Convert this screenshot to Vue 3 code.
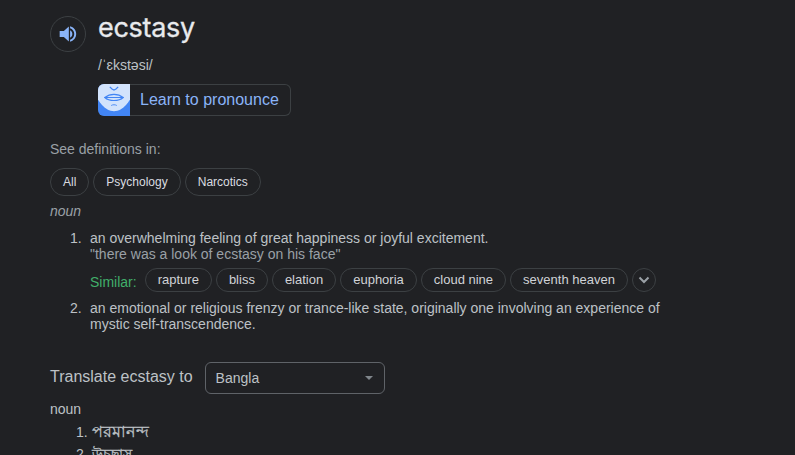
<script setup>
const topics = ['All', 'Psychology', 'Narcotics']
const similar = ['rapture', 'bliss', 'elation', 'euphoria', 'cloud nine', 'seventh heaven']
const translations = ['পরমানন্দ', 'উচ্ছ্বাস']
</script>

<template>
  <main class="dictionary">
    <header class="entry">
      <button class="speaker" aria-label="Listen">
        <svg width="20" height="20" viewBox="0 0 24 24" fill="#8ab4f8">
          <path d="M2 8.500v7h5l6 5.500V3L7 8.500zM14.500 7.500v9c1.700-.8 2.700-2.500 2.700-4.500s-1-3.700-2.700-4.500zM14.500 2.800v2.300c3 .9 5 3.600 5 6.900s-2 6-5 6.900v2.300c4.200-1 7.300-4.700 7.300-9.200s-3.100-8.200-7.300-9.200z" />
        </svg>
      </button>
      <div class="headword">
        <h1>ecstasy</h1>
        <div class="phonetic">/ˈɛkstəsi/</div>
        <button class="learn">
          <svg width="32" height="32" viewBox="0 0 32 32" fill="none">
            <path fill="#4285f4" d="M0 0h32v32H0z" />
            <path fill="#d2e3fc" d="M0 0h32v15.500c-2 3.500-5.500 7.500-9.500 10-4 2.300-9 2.300-13 0C5.500 23 2 19 0 15.500z" />
            <g stroke="#4285f4" stroke-width="1.200">
              <path d="M11.800 2.800 14 5l2 1 2-1 2.200-2.200" />
              <path d="M6.800 13.500c2.200-1.800 4.700-3.200 9.200-3.200s7 1.400 9.200 3.200c-2.200 2-4.700 3-9.200 3s-7-1-9.200-3z" />
              <path d="M6.500 13.500h19" />
              <path d="M13.200 21.500c1.600-1 4-1 5.600 0" stroke-width=".9" />
            </g>
          </svg>
          <span>Learn to pronounce</span>
        </button>
      </div>
    </header>

    <p class="see">See definitions in:</p>
    <div class="topics">
      <button v-for="t in topics" :key="t" class="chip">{{ t }}</button>
    </div>
    <p class="pos">noun</p>

    <section class="senses">
      <div class="sense">
        <span class="num">1.</span>
        <div>
          <p>an overwhelming feeling of great happiness or joyful excitement.</p>
          <p class="example">"there was a look of ecstasy on his face"</p>
          <div class="similar">
            <span class="label">Similar:</span>
            <button v-for="s in similar" :key="s" class="chip small">{{ s }}</button>
            <button class="chip small more" aria-label="More">
              <svg width="12" height="8" viewBox="0 0 12 8" fill="none" stroke="#9aa0a6" stroke-width="2">
                <path d="M1.500 1.500 6 6l4.500-4.500" />
              </svg>
            </button>
          </div>
        </div>
      </div>
      <div class="sense">
        <span class="num">2.</span>
        <p>an emotional or religious frenzy or trance-like state, originally one involving an experience of mystic self-transcendence.</p>
      </div>
    </section>

    <div class="translate">
      <span class="prompt">Translate ecstasy to</span>
      <button class="select">
        <span>Bangla</span>
        <svg width="8" height="4" viewBox="0 0 8 4" fill="#80868b"><path d="M0 0h8L4 4z" /></svg>
      </button>
    </div>
    <p class="tpos">noun</p>
    <div v-for="(t, i) in translations" :key="t" class="translation">
      <span>{{ i + 1 }}.</span><span class="bn">{{ t }}</span>
    </div>
  </main>
</template>

<style>
body {
  background: #202124;
  overflow: hidden;
}
</style>

<style scoped>
.dictionary {
  box-sizing: border-box;
  height: 455px;
  overflow: hidden;
  padding: 12px 0 0 50px;
  background: #202124;
  color: #bdc1c6;
  font: 14px/16px "Liberation Sans", Arial, sans-serif;
}
p, h1 { margin: 0; }
button {
  box-sizing: border-box;
  margin: 0;
  padding: 0;
  background: transparent;
  color: inherit;
  font: inherit;
  border: 1px solid #3c4043;
  white-space: nowrap;
}
.entry {
  display: flex;
  gap: 12px;
  height: 129px;
}
.speaker {
  display: flex;
  align-items: center;
  justify-content: center;
  width: 36px;
  height: 36px;
  margin-top: 4px;
  border-radius: 50%;
}
h1 {
  height: 45px;
  color: #e8eaed;
  font: 400 27px/32px Inter, sans-serif;
  letter-spacing: -0.3px;
  -webkit-text-stroke: 0.3px #e8eaed;
}
.learn {
  display: flex;
  align-items: center;
  width: 193px;
  height: 32px;
  margin-top: 11px;
  border-left: 0;
  border-radius: 6px;
  color: #8ab4f8;
  font-size: 16px;
}
.learn svg {
  flex: none;
  margin: -1px 10px -1px 0;
  border-radius: 6px 0 0 6px;
}
.topics {
  display: flex;
  gap: 4px;
  margin-top: 11px;
}
.chip {
  height: 28px;
  padding: 0 12px;
  border-radius: 14px;
  font-size: 12px;
  line-height: 26px;
}
.topics .chip { color: #dadce0; }
.pos {
  margin-top: 7px;
  color: #9aa0a6;
  font-style: italic;
}
.see { color: #9aa0a6; }
.senses { margin-top: 11px; }
.sense {
  display: flex;
  width: 612px;
}
.num {
  flex: none;
  width: 20px;
  margin-left: 20px;
}
.example { color: #9aa0a6; }
.similar {
  display: flex;
  align-items: center;
  gap: 4px;
  height: 24px;
  margin: 6px 0 8px;
}
.label {
  margin: 4px 4px 0 0;
  color: #41af6a;
}
.small {
  height: 24px;
  color: #d0d3d7;
  font-size: 13px;
  line-height: 22px;
}
.more {
  display: flex;
  align-items: center;
  justify-content: center;
  width: 24px;
  padding: 0;
}
.translate {
  display: flex;
  align-items: center;
  gap: 12px;
  margin-top: 30px;
  font-size: 16px;
}
.prompt { padding-bottom: 2px; }
.select {
  display: flex;
  align-items: center;
  justify-content: space-between;
  width: 180px;
  height: 32px;
  padding: 0 11px 0 10px;
  border-color: #5f6368;
  border-radius: 6px;
  font-size: 14px;
}
.tpos { margin-top: 7px; }
.translation {
  display: flex;
  align-items: center;
  gap: 4px;
  height: 22px;
  padding-left: 26px;
}
.bn {
  font-size: 14px;
  -webkit-text-stroke: 0.3px #bdc1c6;
}
.tpos + .translation { margin-top: 4px; }
.tpos + .translation .bn { font-size: 16px; }
</style>
